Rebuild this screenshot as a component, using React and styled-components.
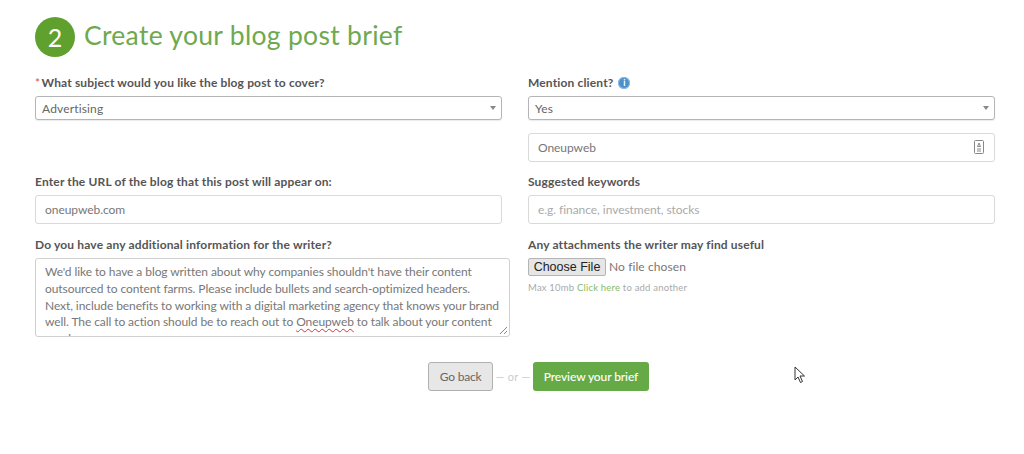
import React from "react";
import styled, { createGlobalStyle } from "styled-components";

const Global = createGlobalStyle`
  html, body { margin: 0; background: #fff; }
  body { font-family: Lato, "Liberation Sans", sans-serif; color: #666; }
  * { box-sizing: border-box; }
`;
const Page = styled.div`
  position: relative; width: 1024px; height: 454px; padding: 17px 29px 0 35px; overflow: hidden; background: #fff;
`;
const Heading = styled.div`display: flex; align-items: center; gap: 9px; height: 39px; margin-bottom: 20px;`;
const StepCircle = styled.div`
  width: 40px; height: 40px; border-radius: 50%; background: #5fa02e; color: #fff;
  display: flex; align-items: center; justify-content: center; font-size: 25px;
`;
const Title = styled.h1`margin: -4px 0 0; font-size: 26.5px; font-weight: 400; color: #6fa94f; letter-spacing: 0.3px;`;
const Columns = styled.div`display: grid; grid-template-columns: 467px 467px; column-gap: 26px;`;
const Column = styled.div`display: flex; flex-direction: column;`;
const Field = styled.div`display: flex; flex-direction: column; height: ${p => p.$h}px;`;
const Label = styled.label`
  display: flex; align-items: center; gap: 5px; height: 14px; margin-bottom: 6px;
  font-size: 12px; font-weight: 700; color: #555; letter-spacing: 0.15px; line-height: 14px;
`;
const Star = styled.span`color: #d9534f; font-weight: 400; margin-right: -2px;`;
const SelectWrap = styled.div`position: relative; height: 24px;`;
const Select = styled.select`
  appearance: none; width: 100%; height: 24px; padding: 0 20px 0 6px; background: #fff;
  border: 1px solid #b5b5b5; border-radius: 3px; font: 400 12px Lato, sans-serif; letter-spacing: 0.15px; color: #666;
  box-shadow: 0 1px 1px rgba(0,0,0,.08);
`;
const Caret = styled.span`
  position: absolute; right: 6px; top: 10px; width: 0; height: 0;
  border-left: 3.5px solid transparent; border-right: 3.5px solid transparent; border-top: 4px solid #888;
`;
const InputWrap = styled.div`position: relative; height: 29px; margin-top: ${p => p.$mt || 0}px;`;
const Input = styled.input`
  width: 100%; height: 29px; padding: 0 9px; background: #fff; border: 1px solid #d9d9d9; border-radius: 3px;
  font: 400 12px Lato, sans-serif; letter-spacing: -0.05px; color: #777;
  &::placeholder { color: #aaa; opacity: 1; }
`;
const ContactIcon = styled.svg`position: absolute; right: 11px; top: 7px;`;
const InfoDot = styled.span`
  width: 12px; height: 12px; border-radius: 50%; background: #4d90c9; color: #fff; font-size: 9px; font-weight: 700;
  display: inline-flex; align-items: center; justify-content: center; box-shadow: inset 0 0 0 1px #8fbde3;
`;
const TextArea = styled.div`
  position: relative; width: 475px; height: 79px; overflow: hidden; padding: 5px 9px 0; background: #fff;
  border: 1px solid #d0d0d0; border-radius: 3px; font-size: 12px; line-height: 16.8px; letter-spacing: -0.08px; color: #777;
`;
const Misspelled = styled.span`text-decoration: underline wavy #d0343c 1px; text-underline-offset: 2px;`;
const Grip = styled.svg`position: absolute; right: 1px; bottom: 1px;`;
const FileInput = styled.input`
  display: block; height: 18px; font: 400 12px Lato, sans-serif; letter-spacing: 0.1px; color: #777;
  &::file-selector-button {
    width: 78px; height: 18px; margin-right: 3px; padding: 0; font: 400 12.5px "Liberation Sans", sans-serif; color: #222;
    background: #e6e6e6; border: 1px solid #b4b4b4; border-radius: 2px;
  }
`;
const Hint = styled.div`margin-top: 6px; font-size: 9.5px; line-height: 12px; letter-spacing: 0.2px; color: #aaa;`;
const HintLink = styled.a`color: #86bb69;`;
const Actions = styled.div`display: flex; align-items: center; justify-content: center; margin-left: 47px; height: 29px;`;
const BackButton = styled.button`
  width: 65px; height: 29px; padding: 0; background: #e7e7e7; border: 1px solid #b0b0b0; border-radius: 3px;
  font: 400 12px Lato, sans-serif; letter-spacing: -0.2px; color: #666;
`;
const Or = styled.span`width: 40px; text-align: center; font-size: 11px; color: #ccc; letter-spacing: 0.3px;`;
const NextButton = styled.button`
  width: 116px; height: 29px; padding: 0; background: #66aa47; border: 0; border-radius: 3px;
  font: 500 12px Lato, sans-serif; letter-spacing: -0.1px; color: #fff;
`;
const Cursor = styled.svg`position: absolute; left: 794px; top: 366px;`;

export default function App() {
  return (
    <Page>
      <Global />
      <Heading>
        <StepCircle>2</StepCircle>
        <Title>Create your blog post brief</Title>
      </Heading>
      <Columns>
        <Column>
          <Field $h={99}>
            <Label><span><Star>* </Star>What subject would you like the blog post to cover?</span></Label>
            <SelectWrap>
              <Select defaultValue="Advertising"><option>Advertising</option></Select>
              <Caret />
            </SelectWrap>
          </Field>
          <Field $h={63}>
            <Label>Enter the URL of the blog that this post will appear on:</Label>
            <InputWrap><Input defaultValue="oneupweb.com" /></InputWrap>
          </Field>
          <Field $h={124}>
            <Label>Do you have any additional information for the writer?</Label>
            <TextArea>
              We'd like to have a blog written about why companies shouldn't have their content outsourced to content farms. Please include bullets and search-optimized headers. Next, include benefits to working with a digital marketing agency that knows your brand well. The call to action should be to reach out to <Misspelled>Oneupweb</Misspelled> to talk about your content needs.
              <Grip width="10" height="10" viewBox="0 0 10 10"><path d="M9 2 2 9M9 6 6 9" stroke="#888" strokeWidth="1" /></Grip>
            </TextArea>
          </Field>
        </Column>
        <Column>
          <Field $h={99}>
            <Label>Mention client? <InfoDot>i</InfoDot></Label>
            <SelectWrap>
              <Select defaultValue="Yes"><option>Yes</option></Select>
              <Caret />
            </SelectWrap>
            <InputWrap $mt={13}>
              <Input defaultValue="Oneupweb" />
              <ContactIcon width="10" height="14" viewBox="0 0 10 14">
                <rect x="0.5" y="0.5" width="9" height="13" rx="1" fill="none" stroke="#888" />
                <path d="M5 3 3.5 6.5h3zM3 9h4M3 11h4" stroke="#888" fill="none" strokeWidth="1" />
              </ContactIcon>
            </InputWrap>
          </Field>
          <Field $h={63}>
            <Label>Suggested keywords</Label>
            <InputWrap><Input placeholder="e.g. finance, investment, stocks" /></InputWrap>
          </Field>
          <Field $h={124}>
            <Label>Any attachments the writer may find useful</Label>
            <FileInput type="file" />
            <Hint>Max 10mb <HintLink>Click here</HintLink> to add another</Hint>
          </Field>
        </Column>
      </Columns>
      <Actions>
        <BackButton>Go back</BackButton>
        <Or>— or —</Or>
        <NextButton>Preview your brief</NextButton>
      </Actions>
      <Cursor width="12" height="18" viewBox="0 0 12 18">
        <path d="M1 1v13l3-3 2.5 5.5 2-1L6 10h4.5z" fill="#fff" stroke="#333" strokeWidth="1" strokeLinejoin="round" />
      </Cursor>
    </Page>
  );
}
